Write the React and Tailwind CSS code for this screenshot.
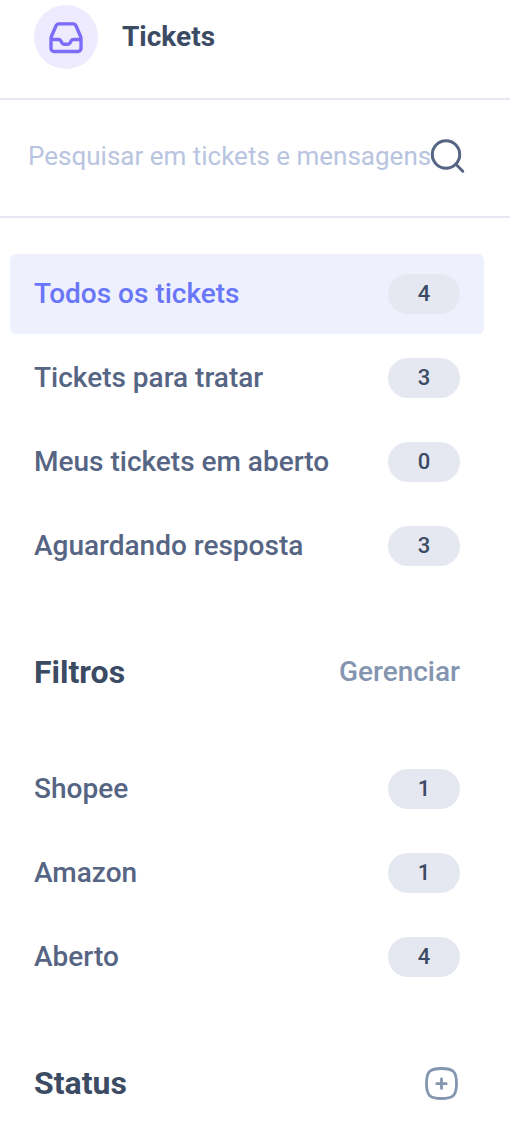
// src/components/TicketsSidebar.jsx
import React, { useState } from "react";

const views = [
  { id: "all", label: "Todos os tickets", count: 4 },
  { id: "todo", label: "Tickets para tratar", count: 3 },
  { id: "mine", label: "Meus tickets em aberto", count: 0 },
  { id: "waiting", label: "Aguardando resposta", count: 3 },
];

const filters = [
  { id: "shopee", label: "Shopee", count: 1 },
  { id: "amazon", label: "Amazon", count: 1 },
  { id: "open", label: "Aberto", count: 4 },
];

const InboxIcon = () => (
  <svg className="w-9 h-9" viewBox="0 0 36 36" fill="none" stroke="#7c6cf8" strokeWidth="3.4" strokeLinejoin="round" aria-hidden="true">
    <path d="M10.500 4.900h15a2.500 2.500 0 0 1 2.300 1.500l4.700 10.800q.5 1 .5 2.200v10.100a3 3 0 0 1-3 3h-24a3 3 0 0 1-3-3V19.400q0-1.200.5-2.200l4.700-10.800a2.500 2.500 0 0 1 2.300-1.500Z" />
    <path d="M3 20.500h7.500q1.500 0 2.200 1.200l1.300 2.300q.7 1.200 2 1.200h4q1.300 0 2-1.200l1.300-2.300q.7-1.200 2.200-1.200H33" />
  </svg>
);

const SearchIcon = () => (
  <svg className="w-9 h-9" viewBox="0 0 36 36" fill="none" stroke="#566583" strokeWidth="3" strokeLinecap="round" aria-hidden="true">
    <circle cx="16" cy="16.500" r="13.700" />
    <path d="m25.800 26.300 7 7" />
  </svg>
);

const AddIcon = () => (
  <svg className="w-9 h-9" viewBox="0 0 36 36" fill="none" stroke="#8495af" strokeWidth="2.800" strokeLinecap="round" aria-hidden="true">
    <path d="M17.500 3.500c11.800 0 15 3.200 15 15s-3.200 15-15 15-15-3.200-15-15 3.200-15 15-15Z" />
    <path d="M17.500 14v9.400M12.800 18.700h9.400" />
  </svg>
);

const TicketList = ({ items, selected, onSelect }) => (
  <ul className="flex flex-col gap-1">
    {items.map((item) => (
      <li key={item.id}>
        <button
          type="button"
          onClick={() => onSelect(item.id)}
          className={`w-full h-20 px-6 flex items-center justify-between rounded-md text-[28px] font-medium ${
            selected === item.id ? "bg-[#eef0fe] text-[#6976f8]" : "text-[#566583]"
          }`}
        >
          <span>{item.label}</span>
          <span className="w-[72px] h-10 pb-[2px] flex items-center justify-center rounded-full bg-[#e5e8f1] text-[22px] text-[#3c4b64]">
            {item.count}
          </span>
        </button>
      </li>
    ))}
  </ul>
);

const App = () => {
  const [selected, setSelected] = useState("all");
  const [query, setQuery] = useState("");

  return (
    <aside className="w-full bg-white pb-8 font-['Roboto',sans-serif] text-[#3c4b64]">
      {/* Header */}
      <header className="flex items-center gap-6 pt-[5px] pb-[29px] px-[34px] border-b-2 border-[#e5e8f1]">
        <div className="w-16 h-16 flex items-center justify-center rounded-full bg-[#efebfe]">
          <InboxIcon />
        </div>
        <h1 className="text-[28px] font-bold">Tickets</h1>
      </header>

      {/* Search */}
      <form
        role="search"
        onSubmit={(e) => e.preventDefault()}
        className="pt-[37px] pb-[41px] pl-7 pr-11 flex items-center border-b-2 border-[#e5e8f1]"
      >
        <input
          type="text"
          value={query}
          onChange={(e) => setQuery(e.target.value)}
          aria-label="Pesquisar em tickets e mensagens"
          placeholder="Pesquisar em tickets e mensagens"
          className="flex-1 min-w-0 h-[38px] text-[26px] outline-none placeholder:text-[#b8c4e0]"
        />
        <button type="submit" aria-label="Pesquisar" className="flex-shrink-0">
          <SearchIcon />
        </button>
      </form>

      <nav className="pt-9 pl-[10px] pr-[26px]">
        <TicketList items={views} selected={selected} onSelect={setSelected} />

        {/* Filters */}
        <div className="h-12 mt-[62px] mb-[53px] px-6 flex items-center justify-between">
          <h2 className="text-[32px] font-bold">Filtros</h2>
          <button type="button" className="text-[28px] font-medium text-[#8495af]">
            Gerenciar
          </button>
        </div>
        <TicketList items={filters} selected={selected} onSelect={setSelected} />

        {/* Status */}
        <div className="h-12 mt-[62px] px-6 flex items-center justify-between">
          <h2 className="text-[32px] font-bold">Status</h2>
          <button type="button" aria-label="Adicionar status">
            <AddIcon />
          </button>
        </div>
      </nav>
    </aside>
  );
};

export default App;
